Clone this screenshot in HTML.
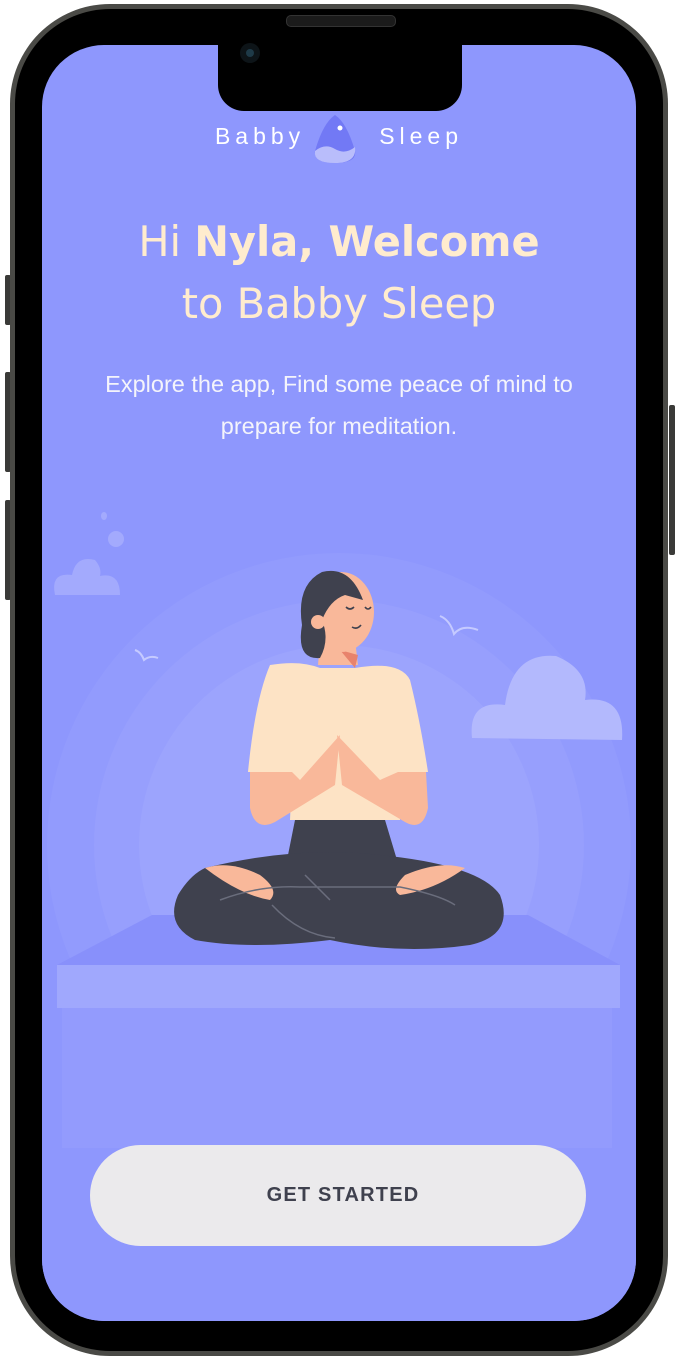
<!DOCTYPE html>
<html><head><meta charset="utf-8"><style>
html,body{margin:0;padding:0;background:#fff;width:680px;height:1360px;overflow:hidden;font-family:"Liberation Sans",sans-serif}
.phone{position:absolute;left:10px;top:4px;width:658px;height:1352px;border-radius:100px;background:#4a4a46;}
.phone2{position:absolute;left:15px;top:9px;width:648px;height:1342px;border-radius:95px;background:#000;}
.screen{position:absolute;left:42px;top:45px;width:594px;height:1276px;border-radius:62px;background:#8e97fd;overflow:hidden}
.notch{position:absolute;left:218px;top:45px;width:244px;height:66px;background:#000;border-radius:0 0 26px 26px}
.spk{position:absolute;left:286px;top:15px;width:108px;height:10px;border-radius:5px;background:#1b1b1b;border:1px solid #333}
.btn-side{position:absolute;background:#3a3a38;width:6px;border-radius:2px}
</style></head><body>
<div class="btn-side" style="left:5px;top:275px;height:50px"></div>
<div class="btn-side" style="left:5px;top:372px;height:100px"></div>
<div class="btn-side" style="left:5px;top:500px;height:100px"></div>
<div class="btn-side" style="left:669px;top:405px;height:150px"></div>
<div class="phone"></div><div class="phone2"></div>
<div class="screen">
<svg width="594" height="1276" viewBox="42 45 594 1276" style="position:absolute;left:0;top:0">
<circle cx="339" cy="845" r="292" fill="#929bfd"/>
<circle cx="339" cy="845" r="245" fill="#979ffd"/>
<circle cx="339" cy="845" r="200" fill="#9ca4fd"/>
<rect x="42" y="1008" width="594" height="320" fill="#8e97fd"/>
<rect x="62" y="1008" width="550" height="140" fill="#939bfd"/>
<polygon points="152,915 528,915 620,965 57,965" fill="#8890fb"/>
<rect x="57" y="965" width="563" height="43" fill="#a0a8fd"/>
<path d="M55,595 Q50,572 72,575 Q76,555 95,560 Q102,568 100,576 Q120,572 120,595 Z" fill="#a3aafd"/>
<ellipse cx="104" cy="516" rx="3" ry="4" fill="#a3aafd"/><circle cx="116" cy="539" r="8" fill="#a3aafd"/>
<path d="M472,738 Q468,700 505,705 Q512,652 556,656 Q590,670 585,700 Q625,695 622,740 Z" fill="#b3b9fd"/>
<path d="M440,616 q10,4 14,18 q8,-10 24,-4" stroke="#c5caff" stroke-width="2" fill="none"/>
<path d="M135,650 q6,2 9,10 q6,-5 14,-2" stroke="#c5caff" stroke-width="2" fill="none"/>
<path d="M320,640 L355,640 L358,665 L318,665 Z" fill="#f9b89a"/>
<path d="M340,650 L358,655 L355,668 Z" fill="#e8836c"/>
<ellipse cx="341" cy="612" rx="33" ry="40" fill="#f9b89a"/>
<path d="M363,600 Q350,565 322,572 Q296,585 302,625 Q296,660 320,658 Q330,640 322,620 Q330,600 345,595 Z" fill="#3f414e"/>
<circle cx="318" cy="622" r="7" fill="#f9b89a"/>
<path d="M346,607 q4,4 8,0 M365,607 q3,4 6,0 M352,627 q5,3 9,-2" stroke="#3f414e" stroke-width="1.6" fill="none"/>
<path d="M270,665 Q300,660 320,668 L355,668 Q400,660 410,680 Q420,720 428,772 L398,772 L400,820 L290,820 L292,772 L248,772 Q255,700 270,665 Z" fill="#fde3c5"/>
<path d="M250,772 L250,808 Q255,832 275,822 L335,785 L340,735 L300,780 L292,772 Z" fill="#f9b89a"/>
<path d="M426,772 L428,808 Q423,832 405,822 L342,785 L337,735 L380,780 L398,772 Z" fill="#f9b89a"/>
<path d="M295,820 L385,820 L400,870 L285,870 Z" fill="#3f414e"/>
<path d="M205,868 Q300,845 380,855 Q480,865 500,895 Q515,935 470,945 Q400,955 330,940 Q250,950 195,940 Q165,925 178,895 Q190,875 205,868 Z" fill="#3f414e"/>
<path d="M205,868 Q230,860 260,875 Q280,890 270,900 Q240,895 205,868 Z" fill="#f9b89a"/>
<path d="M465,868 Q440,860 405,875 Q390,890 400,895 Q435,890 465,868 Z" fill="#f9b89a"/>
<path d="M220,900 Q260,885 300,887 L400,887 Q440,895 455,905 M305,875 L330,900 M272,905 Q300,935 335,938" stroke="#6a6d7c" stroke-width="1.5" fill="none"/>
</svg>
<div style="position:absolute;left:0;width:594px;top:78px;text-align:center;color:#fff;font-size:23px;letter-spacing:5px">
<span>Babby</span><span style="display:inline-block;width:74px"></span><span>Sleep</span></div>
<svg style="position:absolute;left:269px;top:68px" width="48" height="52" viewBox="0 0 48 52"><path d="M24,2 Q36,10 44,38 Q46,50 24,50 Q2,50 4,38 Q12,10 24,2 Z" fill="#7279f5"/><path d="M4,38 Q14,30 24,36 Q34,42 44,34 Q46,50 24,50 Q2,50 4,38Z" fill="#b9bdfb"/><circle cx="29" cy="15" r="2.5" fill="#fff"/></svg>
<div style="position:absolute;left:0;width:594px;top:166px;text-align:center;color:#ffecce;font-size:41.5px;line-height:62px;font-family:'DejaVu Sans','Liberation Sans',sans-serif">Hi <b>Nyla, Welcome</b><br>to Babby Sleep</div>
<div style="position:absolute;left:0;width:594px;top:318px;text-align:center;color:#f4f4fb;font-size:23.5px;line-height:42px">Explore the app, Find some peace of mind to<br>prepare for meditation.</div>
<div style="position:absolute;left:48px;top:1100px;width:496px;height:101px;border-radius:51px;background:#ebeaec;color:#3f414e;font-size:20px;letter-spacing:1.2px;text-align:center;line-height:101px;font-weight:bold;padding-left:10px;box-sizing:border-box">GET STARTED</div>
</div>
<div class="notch"></div>
<div class="spk"></div>
<div style="position:absolute;left:240px;top:43px;width:20px;height:20px;border-radius:50%;background:#0d1418"><div style="margin:6px;width:8px;height:8px;border-radius:50%;background:#1e3a48"></div></div>
</body></html>
